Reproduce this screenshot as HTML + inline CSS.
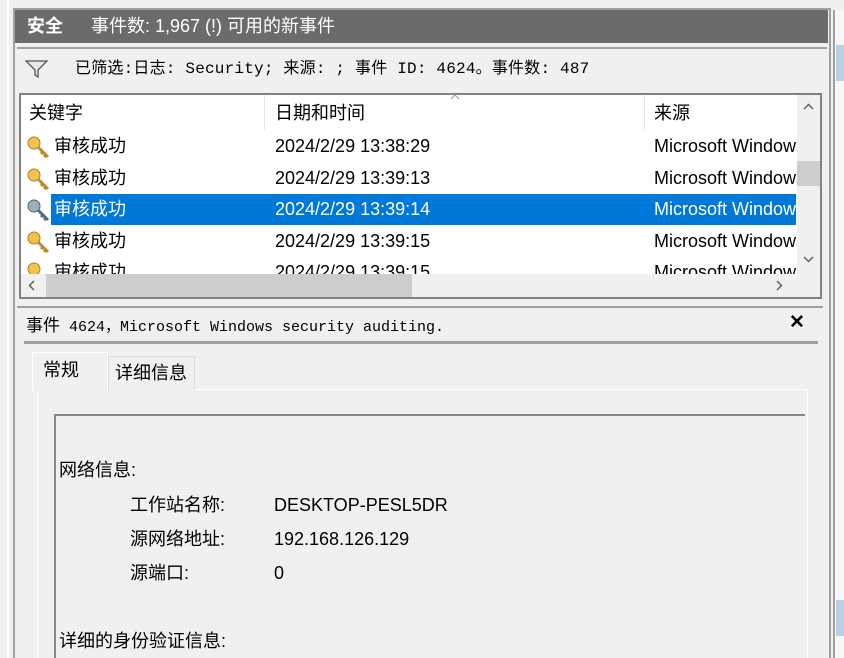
<!DOCTYPE html>
<html><head><meta charset="utf-8"><style>
*{margin:0;padding:0;box-sizing:border-box}
body{width:844px;height:658px;overflow:hidden;background:#f0f0f0;position:relative;font-family:"Liberation Sans","Noto Sans CJK SC",sans-serif;font-size:18px;color:#000}
.a{position:absolute}
.m{font-family:"Liberation Mono","Noto Sans CJK SC",monospace;font-size:16px}
.t{position:absolute;white-space:nowrap;line-height:20px}
</style></head><body>
<div class="a" style="left:7px;top:0;width:2px;height:658px;background:#fff"></div>
<div class="a" style="left:13px;top:8px;width:818px;height:650px;background:#a0a0a0"></div>
<div class="a" style="left:15px;top:10px;width:814px;height:648px;background:#f0f0f0"></div>
<div class="a" style="left:15px;top:10px;width:813px;height:33px;background:#6b6b6b"></div>
<div class="t" style="left:27px;top:16px;color:#fff;font-weight:bold">安全</div>
<div class="t" style="left:91px;top:16px;color:#fff">事件数: 1,967 (!) 可用的新事件</div>
<div class="a" style="left:17px;top:47px;width:810px;height:2px;background:#a0a0a0"></div>
<svg class="a" style="left:25px;top:60px" width="23" height="18" viewBox="0 0 23 18"><path d="M1 1H22L13 10V17L10 15V10Z" fill="#e8e8e8" stroke="#555" stroke-width="1.3"/></svg>
<div class="t m" style="left:75px;top:59px;letter-spacing:0.2px">已筛选:日志: Security; 来源: ; 事件 ID: 4624。事件数: 487</div>
<div class="a" style="left:19px;top:93px;width:803px;height:206px;background:#828282"></div>
<div class="a" style="left:21px;top:95px;width:799px;height:202px;background:#fff"></div>
<div class="a" style="left:264px;top:95px;width:1px;height:35px;background:#e5e5e5"></div>
<div class="a" style="left:644px;top:95px;width:1px;height:35px;background:#e5e5e5"></div>
<div class="t" style="left:29px;top:103px">关键字</div>
<div class="t" style="left:275px;top:103px">日期和时间</div>
<div class="t" style="left:654px;top:103px">来源</div>
<svg class="a" style="left:450px;top:94px" width="10" height="6"><path d="M1 5L5 1L9 5" fill="none" stroke="#999"/></svg>
<div class="a" style="left:51px;top:194px;width:745px;height:31px;background:#0078d7"></div>
<div class="a" style="left:21px;top:130px;width:776px;height:148px;overflow:hidden">
<div style="position:relative">
<div class="t" style="left:33px;top:6px">审核成功</div><div class="t" style="left:254px;top:6px">2024/2/29 13:38:29</div><div class="t" style="left:633px;top:6px">Microsoft Windows</div>
<div class="t" style="left:33px;top:38px">审核成功</div><div class="t" style="left:254px;top:38px">2024/2/29 13:39:13</div><div class="t" style="left:633px;top:38px">Microsoft Windows</div>
<div class="t" style="left:33px;top:69px;color:#fff">审核成功</div><div class="t" style="left:254px;top:69px;color:#fff">2024/2/29 13:39:14</div><div class="t" style="left:633px;top:69px;color:#fff">Microsoft Windows</div>
<div class="t" style="left:33px;top:101px">审核成功</div><div class="t" style="left:254px;top:101px">2024/2/29 13:39:15</div><div class="t" style="left:633px;top:101px">Microsoft Windows</div>
<div class="t" style="left:33px;top:132px">审核成功</div><div class="t" style="left:254px;top:132px">2024/2/29 13:39:15</div><div class="t" style="left:633px;top:132px">Microsoft Windows</div>
<svg class="a" style="left:5px;top:5px" width="24" height="24"><circle cx="8" cy="8" r="6" fill="#f2c14e" stroke="#b08020"/><path d="M12 12L22 22M17 17L15 19M20 20L18 22" stroke="#c08a2a" stroke-width="3"/></svg>
<svg class="a" style="left:5px;top:37px" width="24" height="24"><circle cx="8" cy="8" r="6" fill="#f2c14e" stroke="#b08020"/><path d="M12 12L22 22M17 17L15 19M20 20L18 22" stroke="#c08a2a" stroke-width="3"/></svg>
<svg class="a" style="left:5px;top:68px" width="24" height="24"><circle cx="8" cy="8" r="6" fill="#9bb0b8" stroke="#4a6a70"/><path d="M12 12L22 22M17 17L15 19M20 20L18 22" stroke="#4a7078" stroke-width="3"/></svg>
<svg class="a" style="left:5px;top:100px" width="24" height="24"><circle cx="8" cy="8" r="6" fill="#f2c14e" stroke="#b08020"/><path d="M12 12L22 22M17 17L15 19M20 20L18 22" stroke="#c08a2a" stroke-width="3"/></svg>
<svg class="a" style="left:5px;top:131px" width="24" height="24"><circle cx="8" cy="8" r="6" fill="#f2c14e" stroke="#b08020"/></svg>
</div></div>
<div class="a" style="left:797px;top:95px;width:23px;height:180px;background:#f0f0f0"></div>
<div class="a" style="left:797px;top:161px;width:23px;height:25px;background:#cdcdcd"></div>
<svg class="a" style="left:803px;top:103px" width="11" height="7"><path d="M1 6L5.5 1.5L10 6" fill="none" stroke="#606060" stroke-width="1.5"/></svg>
<svg class="a" style="left:803px;top:256px" width="11" height="7"><path d="M1 1L5.5 5.5L10 1" fill="none" stroke="#606060" stroke-width="1.5"/></svg>
<div class="a" style="left:21px;top:274px;width:799px;height:23px;background:#f0f0f0"></div>
<div class="a" style="left:46px;top:274px;width:366px;height:23px;background:#cdcdcd"></div>
<svg class="a" style="left:28px;top:280px" width="7" height="11"><path d="M6 1L1.5 5.5L6 10" fill="none" stroke="#606060" stroke-width="1.5"/></svg>
<svg class="a" style="left:776px;top:280px" width="7" height="11"><path d="M1 1L5.5 5.5L1 10" fill="none" stroke="#606060" stroke-width="1.5"/></svg>
<div class="a" style="left:17px;top:306px;width:806px;height:2px;background:#a0a0a0"></div>
<div class="t m" style="left:26px;top:314px;font-size:15px"><span style="font-size:17px;font-family:'Noto Sans CJK SC',sans-serif">事件</span> 4624，Microsoft Windows security auditing.</div>
<div class="t" style="left:789px;top:313px;font-weight:bold;font-size:19px">✕</div>
<div class="a" style="left:24px;top:341px;width:794px;height:3px;background:#a0a0a0"></div>
<div class="a" style="left:37px;top:389px;width:771px;height:269px;background:#fff"></div>
<div class="a" style="left:38px;top:390px;width:769px;height:268px;background:#f0f0f0"></div>
<div class="a" style="left:108px;top:356px;width:87px;height:34px;background:#f0f0f0;border:1px solid #dadada;border-bottom:none"></div>
<div class="a" style="left:32px;top:352px;width:76px;height:39px;background:#f0f0f0;border:1px solid #fff;border-bottom:none"></div>
<div class="t" style="left:43px;top:360px">常规</div>
<div class="t" style="left:115px;top:363px">详细信息</div>
<div class="a" style="left:54px;top:414px;width:751px;height:244px;background:#f0f0f0;border-top:2px solid #888;border-left:2px solid #888"></div>
<div class="t" style="left:59px;top:460px">网络信息:</div>
<div class="t" style="left:130px;top:495px">工作站名称:</div><div class="t" style="left:274px;top:495px">DESKTOP-PESL5DR</div>
<div class="t" style="left:130px;top:529px">源网络地址:</div><div class="t" style="left:274px;top:529px">192.168.126.129</div>
<div class="t" style="left:130px;top:563px">源端口:</div><div class="t" style="left:274px;top:563px">0</div>
<div class="t" style="left:59px;top:631px">详细的身份验证信息:</div>
<div class="a" style="left:833px;top:10px;width:2px;height:648px;background:#a0a0a0"></div>
<div class="a" style="left:835px;top:10px;width:9px;height:648px;background:#f7f7f7"></div>
<div class="a" style="left:836px;top:45px;width:8px;height:36px;background:#b9cfe6"></div>
<div class="a" style="left:836px;top:600px;width:8px;height:36px;background:#b9cfe6"></div>
</body></html>
